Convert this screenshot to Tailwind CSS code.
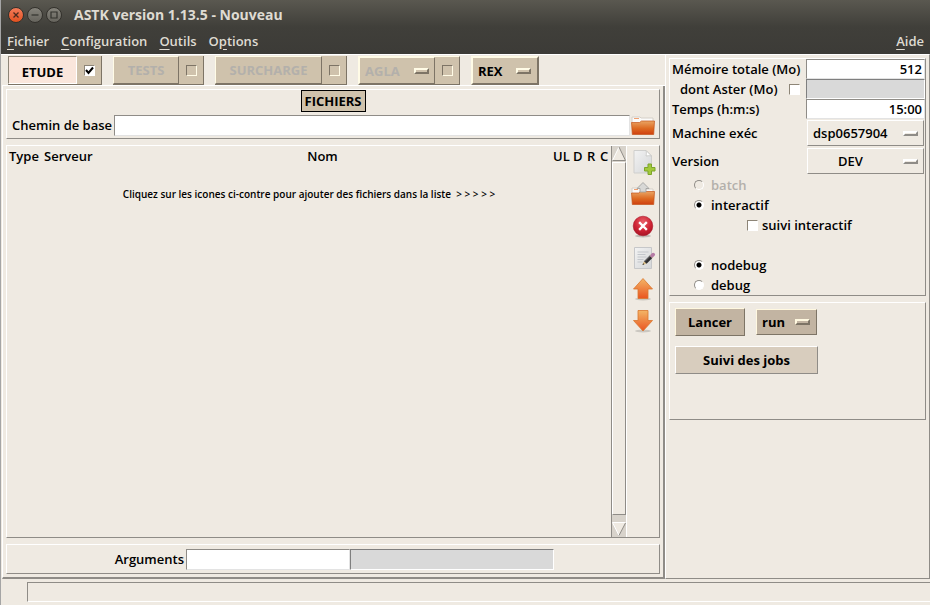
<!DOCTYPE html>
<html lang="fr">
<head>
  <meta charset="UTF-8">
  <meta name="viewport" content="width=device-width, initial-scale=1.0">
  <title>ASTK version 1.13.5 - Nouveau</title>
  <script src="https://cdn.jsdelivr.net/npm/@tailwindcss/browser@4"></script>
</head>
<body class="flex min-h-screen flex-col border-l border-[#a5a5a5] bg-[#efeae2] font-['Open_Sans','Noto_Sans',sans-serif] text-[13px] leading-5 font-semibold text-black">

  <!-- Title bar and menu -->
  <div class="bg-linear-to-b from-[#5a5850] via-[#403f3a] to-[#3c3b37] text-[#dfdbd2]">
    <header class="flex h-[30px] items-center gap-[3px] pl-[7px]">
      <button aria-label="Fermer" class="size-4 rounded-full border border-[#33312c] bg-linear-to-b from-[#f37b58] to-[#e2511d]">
        <svg viewBox="0 0 14 14" class="size-full" fill="none" stroke="#4a2a1e" stroke-width="1.3"><path d="M4.500 4.500l5 5M9.500 4.500l-5 5"/></svg>
      </button>
      <button aria-label="Réduire" class="size-4 rounded-full border border-[#33312c] bg-linear-to-b from-[#85837b] to-[#66645d]">
        <svg viewBox="0 0 14 14" class="size-full" fill="none" stroke="#33322d" stroke-width="1.2"><path d="M3.500 7h7"/></svg>
      </button>
      <button aria-label="Agrandir" class="size-4 rounded-full border border-[#33312c] bg-linear-to-b from-[#85837b] to-[#66645d]">
        <svg viewBox="0 0 14 14" class="size-full" fill="none" stroke="#33322d" stroke-width="1.2"><path d="M4 4h6v6H4z"/></svg>
      </button>
      <h1 class="ml-[9px] text-[14px] font-bold">ASTK version 1.13.5 - Nouveau</h1>
    </header>
    <nav class="flex h-6 items-center gap-3 px-[6px] pb-[3px]">
      <a href="#"><u class="underline-offset-3">F</u>ichier</a>
      <a href="#"><u class="underline-offset-3">C</u>onfiguration</a>
      <a href="#"><u class="underline-offset-3">O</u>utils</a>
      <a href="#">O<u class="underline-offset-3">p</u>tions</a>
      <a href="#" class="ml-auto"><u class="underline-offset-3">A</u>ide</a>
    </nav>
  </div>

  <div class="flex flex-1">
    <!-- Left side -->
    <div class="flex min-w-0 flex-1 flex-col border-t border-white pl-px">
      <div class="flex h-[31px] items-start gap-[11px] border-b border-white pt-px pl-[6px] font-bold">
        <div class="flex h-[29px] border-r border-b border-[#7d7466] bg-[#cfc2ac]">
          <button class="w-[69px] border border-t-[#8d8577] border-r-white border-b-white border-l-[#8d8577] bg-[#fae6dc] pt-1">ETUDE</button>
          <label class="relative flex w-6 items-center justify-center">
            <input type="checkbox" checked aria-label="Activer ETUDE" class="peer size-[11px] appearance-none border border-t-[#8d8577] border-r-white border-b-white border-l-[#8d8577] bg-white">
            <svg viewBox="0 0 9 9" class="absolute hidden size-[9px] peer-checked:block" fill="none" stroke="#000" stroke-width="2"><path d="M1 4l2.500 3L8 1.500"/></svg>
          </label>
        </div>
        <div class="flex h-[29px] border-r border-b border-[#7d7466] bg-[#cfc2ac]">
          <button disabled class="w-[66px] border border-t-[#fffbe6] border-r-[#7d7466] border-b-[#7d7466] border-l-[#fffbe6] text-[#b3b0ab]">TESTS</button>
          <label class="flex w-6 items-center justify-center">
            <input type="checkbox" disabled aria-label="Activer TESTS" class="size-[11px] appearance-none border border-t-[#7d7466] border-r-[#fffbe6] border-b-[#fffbe6] border-l-[#7d7466]">
          </label>
        </div>
        <div class="flex h-[29px] border-r border-b border-[#7d7466] bg-[#cfc2ac]">
          <button disabled class="w-[107px] border border-t-[#fffbe6] border-r-[#7d7466] border-b-[#7d7466] border-l-[#fffbe6] text-[#b3b0ab]">SURCHARGE</button>
          <label class="flex w-6 items-center justify-center">
            <input type="checkbox" disabled aria-label="Activer SURCHARGE" class="size-[11px] appearance-none border border-t-[#7d7466] border-r-[#fffbe6] border-b-[#fffbe6] border-l-[#7d7466]">
          </label>
        </div>
        <div class="flex h-[29px] border border-t-[#fffbe6] border-r-[#7d7466] border-b-[#7d7466] border-l-[#fffbe6] bg-[#cfc2ac]">
          <div class="relative flex items-center">
            <select disabled aria-label="AGLA" class="h-[27px] w-[76px] appearance-none border border-t-[#fffbe6] border-r-[#7d7466] border-b-[#7d7466] border-l-[#fffbe6] pl-[5px] text-[#b3b0ab] opacity-100"><option>AGLA</option></select>
            <span class="pointer-events-none absolute right-[6px] h-[6px] w-[15px] border-2 border-t-[#fffbe6] border-r-[#7d7466] border-b-[#7d7466] border-l-[#fffbe6]"></span>
          </div>
          <label class="flex w-6 items-center justify-center">
            <input type="checkbox" disabled aria-label="Activer AGLA" class="size-[11px] appearance-none border border-t-[#7d7466] border-r-[#fffbe6] border-b-[#fffbe6] border-l-[#7d7466]">
          </label>
        </div>
        <div class="relative flex h-[29px] items-center border border-t-[#fffbe6] border-r-[#7d7466] border-b-[#7d7466] border-l-[#fffbe6] bg-[#cfc2ac]">
          <select aria-label="REX" class="h-[27px] w-[66px] appearance-none border border-t-[#fffbe6] border-r-[#7d7466] border-b-[#7d7466] border-l-[#fffbe6] pl-[5px]"><option>REX</option></select>
          <span class="pointer-events-none absolute right-[7px] h-[6px] w-[15px] border-2 border-t-[#fffbe6] border-r-[#7d7466] border-b-[#7d7466] border-l-[#fffbe6]"></span>
        </div>
      </div>

      <main class="flex flex-1 flex-col gap-[6px] border-r-2 border-b-2 border-l border-r-[#8f8c87] border-b-[#8f8c87] border-l-white p-[3px]">
        <section class="border border-t-white border-r-[#8f8c87] border-b-[#8f8c87] border-l-white">
          <div class="flex justify-center">
            <h2 class="border border-black bg-[#cfc2ac] px-[3px] font-bold">FICHIERS</h2>
          </div>
          <div class="flex h-[26px] items-center pl-1">
            <label for="chemin" class="w-[103px] shrink-0 pl-px whitespace-nowrap">Chemin de base</label>
            <input id="chemin" type="text" class="h-[21px] min-w-0 flex-1 border border-t-[#8f8c87] border-r-[#e3e3e3] border-b-[#e3e3e3] border-l-[#8f8c87] bg-white px-1">
            <button aria-label="Parcourir" class="mr-[3px]">
              <svg viewBox="0 0 26 26" class="size-[26px]">
                <defs>
                  <linearGradient id="orange" x1="0" y1="0" x2="0" y2="1"><stop offset="0" stop-color="#e9a564"/><stop offset=".55" stop-color="#dd6a22"/><stop offset="1" stop-color="#cf3f0f"/></linearGradient>
                  <linearGradient id="fleche" x1="0" y1="0" x2="0" y2="1"><stop offset="0" stop-color="#f3b566"/><stop offset="1" stop-color="#ea5420"/></linearGradient>
                  <linearGradient id="papier" x1="0" y1="0" x2="1" y2="1"><stop offset="0" stop-color="#f3f3f3"/><stop offset="1" stop-color="#d4d6d8"/></linearGradient>
                  <radialGradient id="rouge" cx=".5" cy=".3" r=".7"><stop offset="0" stop-color="#e8606a"/><stop offset=".6" stop-color="#cf2434"/><stop offset="1" stop-color="#a81424"/></radialGradient>
                </defs>
                <path d="M2 12V5h8l1 1h12v6z" fill="#fbfbfa" stroke="#d5d0c8"/>
                <path d="M4 6.500h5" stroke="#f0a070"/>
                <path d="M1.500 10.500h8l2-1.500h13l-.8 13.500H2.300z" fill="url(#orange)" stroke="#c4531a" stroke-width=".7"/>
              </svg>
            </button>
          </div>
        </section>

        <!-- File list -->
        <section class="flex flex-1 border border-t-white border-r-[#8f8c87] border-b-[#8f8c87] border-l-white">
          <div class="min-w-0 flex-1">
            <table class="w-full table-fixed">
              <thead>
                <tr class="text-left">
                  <th class="w-[35px] pl-[2px] font-semibold">Type</th>
                  <th class="w-[51px] pl-[2px] font-semibold">Serveur</th>
                  <th class="pr-px text-center font-semibold">Nom</th>
                  <th class="w-[20px] font-semibold">UL</th>
                  <th class="w-[14px] font-semibold">D</th>
                  <th class="w-[13px] font-semibold">R</th>
                  <th class="w-[11px] font-semibold">C</th>
                </tr>
              </thead>
              <tbody>
                <tr><td colspan="7" class="pt-[18px] text-center text-[10px]">Cliquez sur les icones ci-contre pour ajouter des fichiers dans la liste &nbsp;&gt; &gt; &gt; &gt; &gt;</td></tr>
              </tbody>
            </table>
          </div>

          <!-- Scrollbar -->
          <div class="flex w-4 flex-col border-r border-l border-r-white border-l-[#8f8c87] bg-[#d8d3cb]">
            <svg viewBox="0 0 14 16" class="h-4 w-[14px]" fill="#efeae2"><path d="M7 1L.5 14.500h13z"/><path d="M7 1L.5 14.500" stroke="#fff"/><path d="M7 1l6.500 13.500H.5" fill="none" stroke="#8f8c87"/></svg>
            <div class="flex-1 border border-t-white border-r-[#8f8c87] border-b-[#8f8c87] border-l-white bg-[#efeae2]"></div>
            <svg viewBox="0 0 14 15" class="mt-[7px] h-[15px] w-[14px]" fill="#efeae2"><path d="M.5 .5h13L7 13.500z"/><path d="M13.500 .5H.5L7 13.500" fill="none" stroke="#fff"/><path d="M13.500 1L7 13.500" stroke="#8f8c87"/></svg>
          </div>

          <div class="flex w-8 flex-col items-center gap-[6px] pt-[3px]">
            <button aria-label="Nouveau fichier">
              <svg viewBox="0 0 26 26" class="size-[26px]">
                <path d="M4 1.500h12l5.500 5.500v17H4z" fill="url(#papier)" stroke="#cfcfcd"/>
                <path d="M16 1.500c.5 2 .5 3.500 0 5.500 2-.4 4-.4 5.500 0z" fill="#fff" stroke="#c5c5c3" stroke-width=".8"/>
                <path d="M18 15h3.500v3.500H25V22h-3.500v3.500H18V22h-3.500v-3.500H18z" fill="#a3c93c" stroke="#7da52a"/>
              </svg>
            </button>
            <button aria-label="Ajouter un fichier">
              <svg viewBox="0 0 26 26" class="size-[26px]">
                <path d="M2 13V7h7l1 1h13v5z" fill="#fbfbfa" stroke="#d5d0c8"/>
                <path d="M4 8.500h4" stroke="#f0a070"/>
                <path d="M1.500 12h7l2-1.500h14l-.8 13H2.300z" fill="url(#orange)" stroke="#c4531a" stroke-width=".7"/>
                <path d="M13 1.500l6 6h-3V11h-6V7.500H7z" fill="#d8d8d6" stroke="#9c9c9a" stroke-width=".8"/>
              </svg>
            </button>
            <button aria-label="Supprimer">
              <svg viewBox="0 0 26 26" class="size-[26px]">
                <ellipse cx="13" cy="23" rx="8" ry="1.500" fill="#000" opacity=".2"/>
                <circle cx="13" cy="13" r="9.800" fill="url(#rouge)" stroke="#a81828" stroke-width=".6"/>
                <path d="M10 10l6 6M16 10l-6 6" stroke="#fff" stroke-width="2.400" stroke-linecap="square"/>
              </svg>
            </button>
            <button aria-label="Éditer">
              <svg viewBox="0 0 26 26" class="size-[26px]">
                <path d="M4.500 2.500h17v21h-17z" fill="url(#papier)" stroke="#c6c7c9"/>
                <path d="M7.500 7h11M7.500 9.500h8M7.500 12h9M7.500 14.500h6M7.500 17h5" stroke="#c3c6cb"/>
                <path d="M12.500 20l1.500-4 2.700 2.500z" fill="#d9bd85"/>
                <path d="M12.500 20l.6-1.700 1.200 1z" fill="#222"/>
                <path d="M15.300 17.500l6-6" stroke="#2e2e30" stroke-width="3.600"/>
                <path d="M14.800 16.500l6-6" stroke="#85858a" stroke-width=".8"/>
                <path d="M21 11.800l1-1" stroke="#d4dc8a" stroke-width="3.600"/>
                <path d="M22 10.800l1.200-1.200" stroke="#b57ba6" stroke-width="3.600" stroke-linecap="round"/>
              </svg>
            </button>
            <button aria-label="Monter">
              <svg viewBox="0 0 26 26" class="size-[26px]">
                <ellipse cx="13" cy="22" rx="8" ry="1.500" fill="#000" opacity=".15"/>
                <path d="M13 1.500l9.500 10.500H18v9.500H8V12H3.500z" fill="url(#fleche)" stroke="#d9762f" stroke-width=".8"/>
              </svg>
            </button>
            <button aria-label="Descendre">
              <svg viewBox="0 0 26 26" class="size-[26px]">
                <ellipse cx="13" cy="22" rx="8" ry="1.500" fill="#000" opacity=".15"/>
                <path d="M13 22l9.500-10.500H18v-10H8v10H3.500z" fill="url(#fleche)" stroke="#d9762f" stroke-width=".8"/>
              </svg>
            </button>
          </div>
        </section>

        <section class="flex h-[30px] items-center border border-t-white border-r-[#8f8c87] border-b-[#8f8c87] border-l-white">
          <label for="arguments" class="w-[179px] pr-[2px] text-right">Arguments</label>
          <input id="arguments" type="text" class="h-[21px] w-[164px] border border-t-[#8f8c87] border-r-[#e3e3e3] border-b-[#e3e3e3] border-l-[#8f8c87] bg-white px-1">
          <input type="text" disabled aria-label="Arguments fixes" class="h-[21px] w-[204px] border border-t-[#7f7f7f] border-r-white border-b-white border-l-[#7f7f7f] bg-[#d9d9d9] px-1">
        </section>
      </main>
    </div>

    <!-- Right side -->
    <aside class="flex w-[265px] flex-col gap-[6px] border border-t-white border-r-[#8f8c87] border-b-[#8f8c87] border-l-white p-[3px]">
      <section class="border border-t-white border-r-[#8f8c87] border-b-[#8f8c87] border-l-white">
        <div class="grid grid-cols-[1fr_119px] items-center">
          <label for="memoire" class="pl-[2px] whitespace-nowrap">Mémoire totale (Mo)</label>
          <input id="memoire" type="text" value="512" class="h-5 border border-t-[#8f8c87] border-r-[#e3e3e3] border-b-[#e3e3e3] border-l-[#8f8c87] bg-white px-[2px] text-right">
          <label class="flex items-center gap-[11px] pl-[10px] whitespace-nowrap">dont Aster (Mo)
            <input type="checkbox" class="size-[11px] appearance-none border border-t-[#8d8577] border-r-white border-b-white border-l-[#8d8577] bg-white checked:bg-black">
          </label>
          <input type="text" disabled aria-label="Mémoire Aster" class="h-5 border border-t-[#7f7f7f] border-r-white border-b-white border-l-[#7f7f7f] bg-[#d9d9d9] px-[2px]">
          <label for="temps" class="pl-[2px]">Temps (h:m:s)</label>
          <input id="temps" type="text" value="15:00" class="h-5 border border-t-[#8f8c87] border-r-[#e3e3e3] border-b-[#e3e3e3] border-l-[#8f8c87] bg-white px-[2px] text-right">
        </div>
        <div class="grid grid-cols-[1fr_117px] items-center gap-y-[2px] pt-px pr-px">
          <label for="machine" class="pl-[2px]">Machine exéc</label>
          <div class="relative flex items-center">
            <select id="machine" class="h-[26px] w-full appearance-none border border-t-white border-r-[#8f8c87] border-b-[#8f8c87] border-l-white pl-[5px]"><option>dsp0657904</option></select>
            <span class="pointer-events-none absolute right-[6px] h-[5px] w-[15px] border-2 border-t-white border-r-[#8f8c87] border-b-[#8f8c87] border-l-white"></span>
          </div>
          <label for="version" class="pl-[2px]">Version</label>
          <div class="relative flex items-center">
            <select id="version" class="h-[26px] w-full appearance-none border border-t-white border-r-[#8f8c87] border-b-[#8f8c87] border-l-white pl-[30px]"><option>DEV</option></select>
            <span class="pointer-events-none absolute right-[6px] h-[5px] w-[15px] border-2 border-t-white border-r-[#8f8c87] border-b-[#8f8c87] border-l-white"></span>
          </div>
        </div>
        <div class="flex flex-col pt-px pl-6">
          <label class="flex items-center gap-[7px] text-[#b3b0ab]">
            <input type="radio" name="mode" disabled class="size-[10px] appearance-none rounded-full border border-t-[#8f8c87] border-r-white border-b-white border-l-[#8f8c87]">batch
          </label>
          <label class="flex items-center gap-[7px]">
            <input type="radio" name="mode" checked class="size-[10px] appearance-none rounded-full border border-t-[#8f8c87] border-r-white border-b-white border-l-[#8f8c87] bg-white checked:bg-[radial-gradient(#000_2px,#fff_3px)]">interactif
          </label>
          <label class="flex items-center gap-[4px] pl-[53px]">
            <input type="checkbox" class="size-[11px] appearance-none border border-t-[#8d8577] border-r-white border-b-white border-l-[#8d8577] bg-white checked:bg-black">suivi interactif
          </label>
        </div>
        <div class="flex flex-col pt-5 pl-6">
          <label class="flex items-center gap-[7px]">
            <input type="radio" name="compilation" checked class="size-[10px] appearance-none rounded-full border border-t-[#8f8c87] border-r-white border-b-white border-l-[#8f8c87] bg-white checked:bg-[radial-gradient(#000_2px,#fff_3px)]">nodebug
          </label>
          <label class="flex items-center gap-[7px]">
            <input type="radio" name="compilation" class="size-[10px] appearance-none rounded-full border border-t-[#8f8c87] border-r-white border-b-white border-l-[#8f8c87] bg-white checked:bg-[radial-gradient(#000_2px,#fff_3px)]">debug
          </label>
        </div>
      </section>

      <section class="flex h-[118px] flex-col items-start gap-[10px] border border-t-white border-r-[#8f8c87] border-b-[#8f8c87] border-l-white p-[5px] font-bold">
        <div class="flex items-center gap-[11px]">
          <button class="h-7 w-[70px] border border-t-[#fff8e0] border-r-[#7d7466] border-b-[#7d7466] border-l-[#fff8e0] bg-[#c2b4a2]">Lancer</button>
          <div class="relative flex items-center">
            <select aria-label="Mode de lancement" class="h-[26px] w-[61px] appearance-none border border-t-[#fff8e0] border-r-[#7d7466] border-b-[#7d7466] border-l-[#fff8e0] bg-[#c2b4a2] pl-[5px]"><option>run</option></select>
            <span class="pointer-events-none absolute right-[7px] h-[6px] w-[15px] border-2 border-t-[#fff8e0] border-r-[#7d7466] border-b-[#7d7466] border-l-[#fff8e0]"></span>
          </div>
        </div>
        <button class="h-7 w-[143px] border border-t-white border-r-[#8f8c87] border-b-[#8f8c87] border-l-white bg-[#d8cdbe]">Suivi des jobs</button>
      </section>
    </aside>
  </div>

  <!-- Status bar -->
  <footer class="pt-[3px] pb-[3px] pl-[26px]">
    <div class="h-5 border border-r-0 border-t-[#8f8c87] border-b-white border-l-[#8f8c87]"></div>
  </footer>
</body>
</html>
